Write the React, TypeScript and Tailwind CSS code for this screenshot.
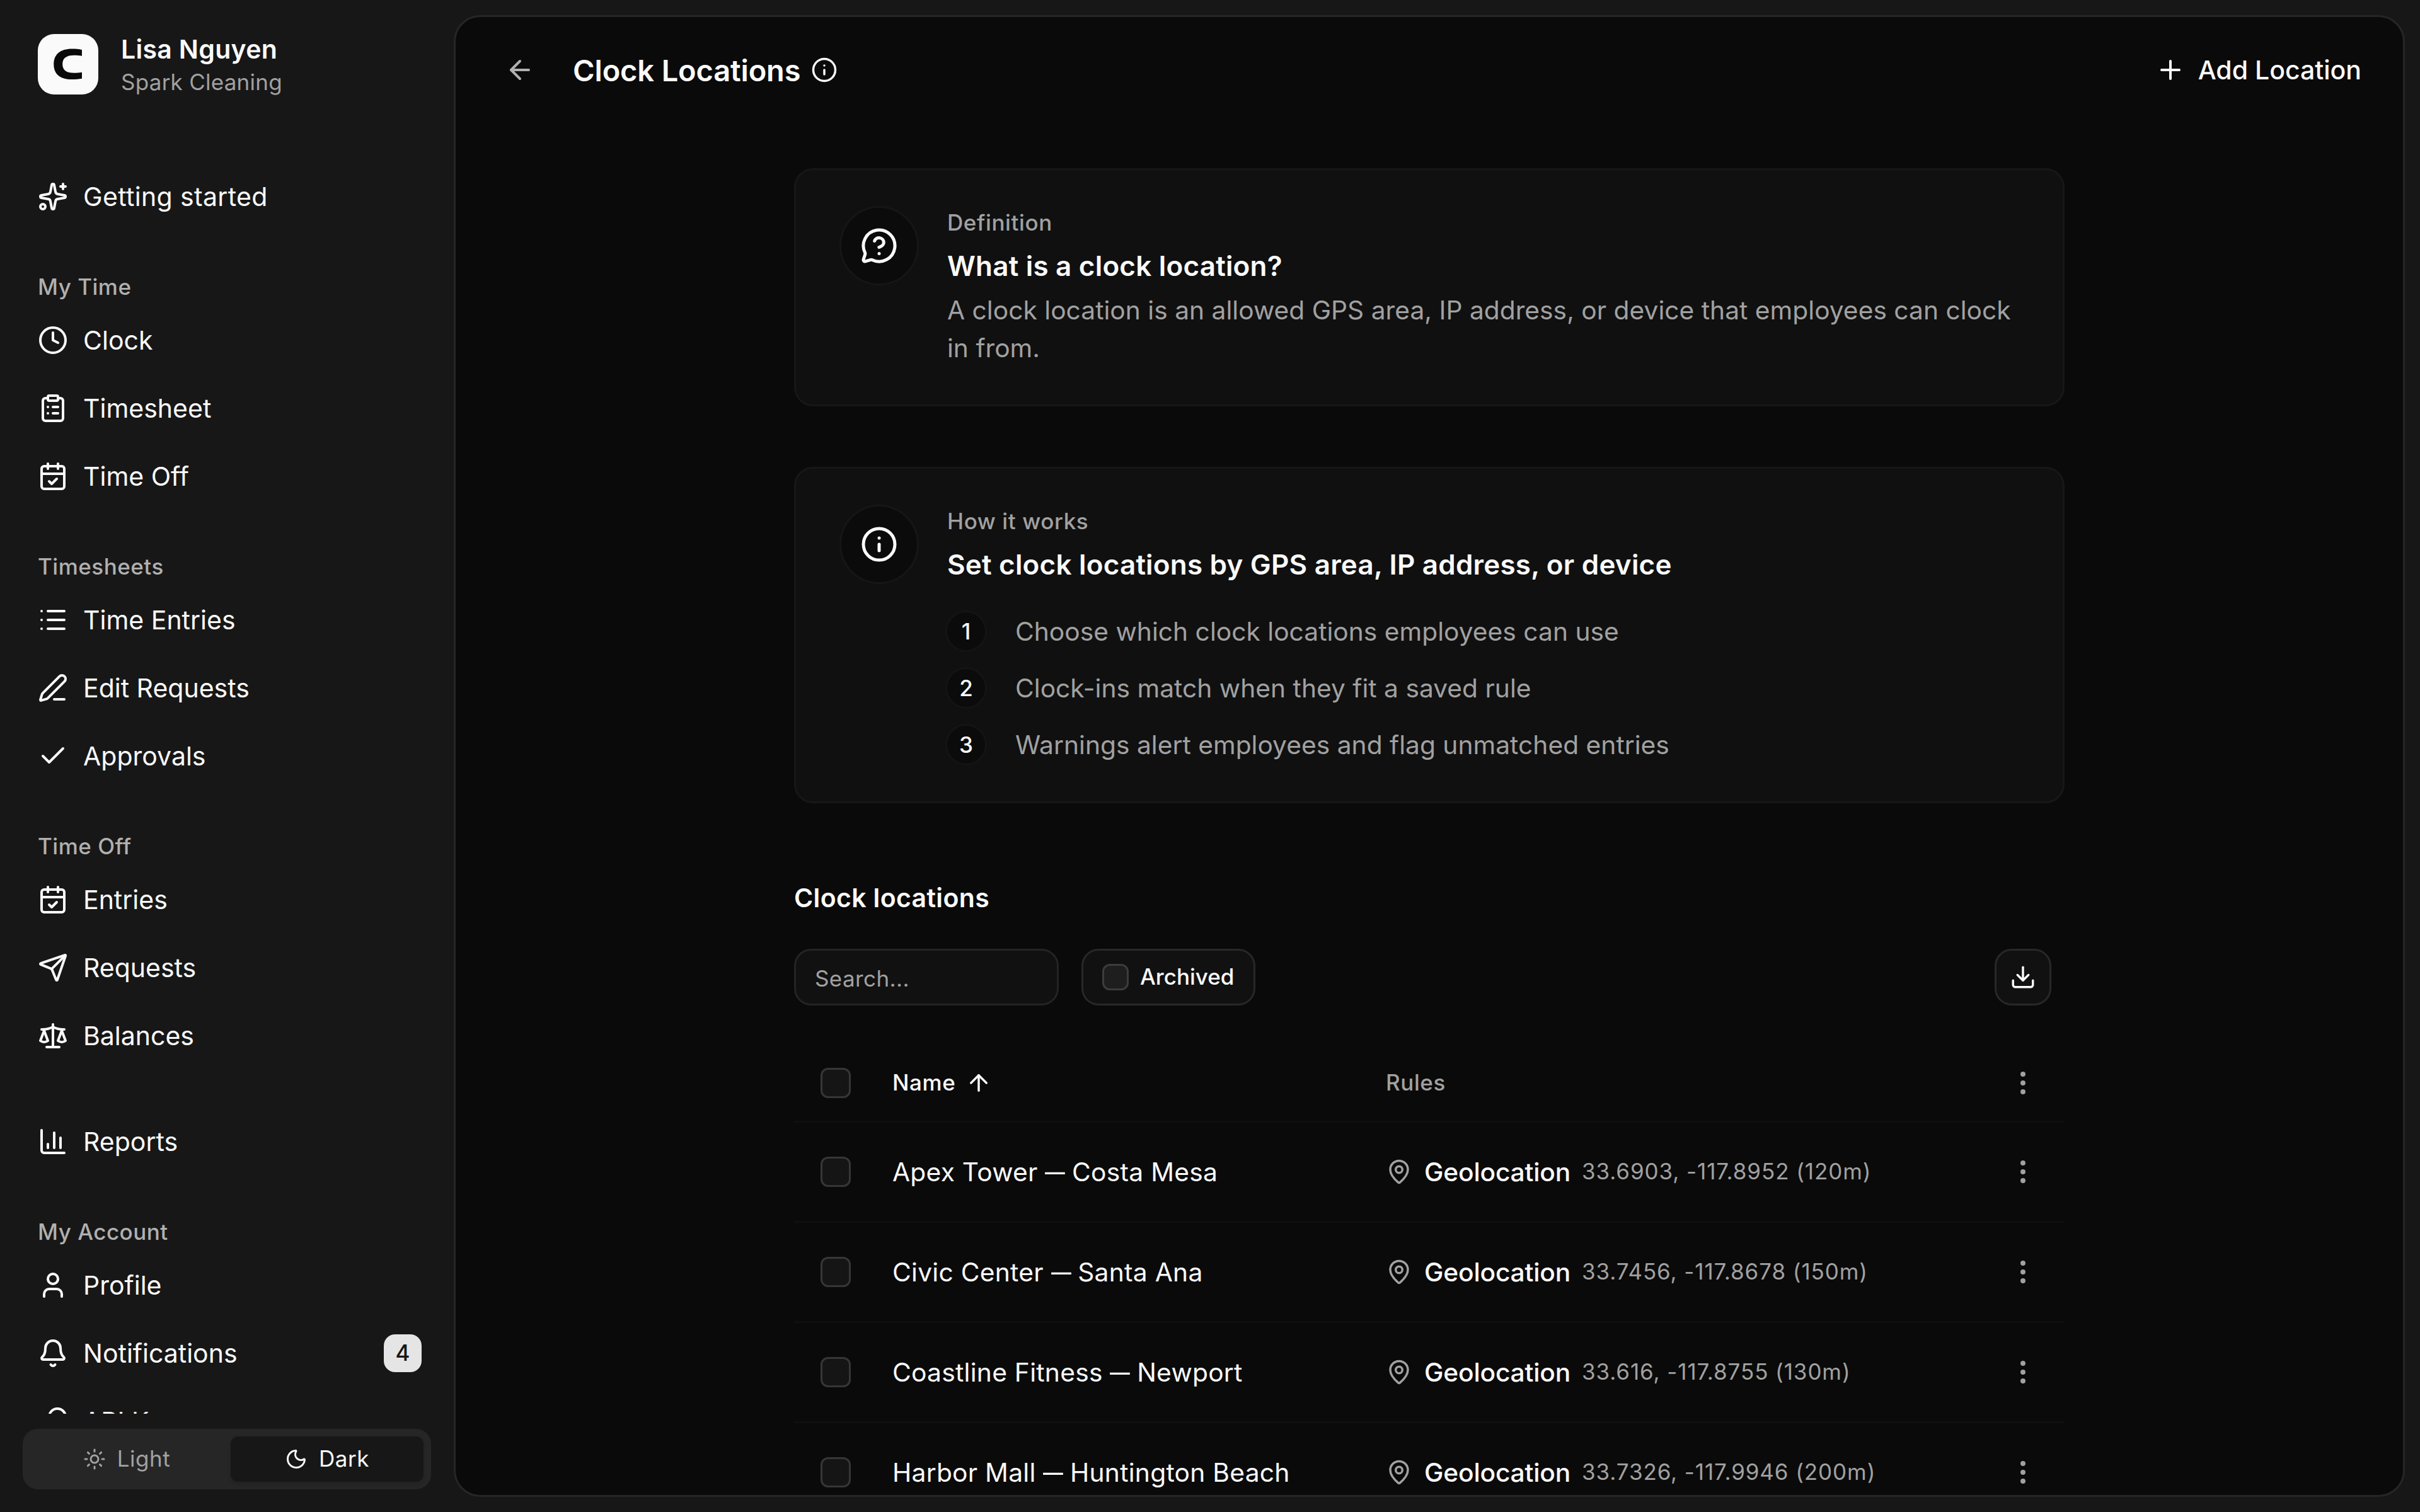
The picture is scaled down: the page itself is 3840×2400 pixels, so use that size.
import React, { type ReactNode } from "react";
import {
  ArrowLeft,
  ArrowUp,
  Bell,
  CalendarCheck,
  Check,
  ClipboardList,
  Clock,
  Download,
  EllipsisVertical,
  Info,
  KeyRound,
  List,
  MapPin,
  MessageCircleQuestionMark,
  Moon,
  PenLine,
  Plus,
  Scale,
  Send,
  Sun,
  User,
  type LucideIcon,
} from "lucide-react";

/* Four-pointed spark with a plus and a small ring. */
function SparkIcon({ className }: { className?: string }) {
  return (
    <svg viewBox="0 0 24 24" fill="none" stroke="currentColor" strokeWidth="2" strokeLinecap="round" strokeLinejoin="round" className={className}>
      <path d="M11.017 2.814a1 1 0 0 1 1.966 0l1.051 5.558a2 2 0 0 0 1.594 1.594l5.558 1.051a1 1 0 0 1 0 1.966l-5.558 1.051a2 2 0 0 0-1.594 1.594l-1.051 5.558a1 1 0 0 1-1.966 0l-1.051-5.558a2 2 0 0 0-1.594-1.594l-5.558-1.051a1 1 0 0 1 0-1.966l5.558-1.051a2 2 0 0 0 1.594-1.594z" />
      <path d="M20 2v4" />
      <path d="M22 4h-4" />
      <circle cx="4" cy="20" r="2" />
    </svg>
  );
}

/* Bars of a small chart beside an L-shaped axis. */
function ReportsIcon({ className }: { className?: string }) {
  return (
    <svg viewBox="0 0 24 24" fill="none" stroke="currentColor" strokeWidth="2" strokeLinecap="round" strokeLinejoin="round" className={className}>
      <path d="M3 3v16a2 2 0 0 0 2 2h16" />
      <path d="M18 17V9" />
      <path d="M13 17V5" />
      <path d="M8 17v-3" />
    </svg>
  );
}

function Logo() {
  return (
    <svg viewBox="0 0 96 96" className="size-24 shrink-0">
      <rect width="96" height="96" rx="26" fill="#fafafa" />
      <path
        d="M70 24.900C65 24 60 23.600 54 23.600C36 23.600 25.300 32 25.300 48C25.300 64 36 72 54 72C60 72 65 71.700 70 70.800V60.800C65.500 61.500 61.500 61.800 57.500 61.800C45.500 61.800 39.200 57.500 39.200 47.800C39.200 38 45.500 33.700 57.500 33.700C61.500 33.700 65.500 34 70 34.800Z"
        fill="#0a0a0a"
      />
    </svg>
  );
}

type Icon = LucideIcon | typeof SparkIcon;

function NavItem({ icon: I, label, badge }: { icon: Icon; label: string; badge?: string }) {
  return (
    <div className="flex h-[108px] shrink-0 items-center text-[41px] text-[#fafafa]">
      <I className="mr-6 size-12 shrink-0" />
      <span className={label === "Getting started" ? "leading-[60px] tracking-[0.35px]" : "leading-[60px]"}>{label}</span>
      {badge && (
        <span className="ml-auto flex size-[60px] items-center justify-center rounded-[18px] bg-[#e5e5e5] pb-0.5 text-[35px] font-medium text-[#171717]">
          {badge}
        </span>
      )}
    </div>
  );
}

function NavGroup({ label, children }: { label?: string; children: ReactNode }) {
  return (
    <div className="mb-[60px] flex shrink-0 flex-col">
      {label && <div className="h-[60px] text-[35px] font-medium leading-[58px] tracking-[0.5px] text-[#b0b0b0]">{label}</div>}
      {children}
    </div>
  );
}

function Sidebar() {
  return (
    <aside className="flex h-full w-[720px] shrink-0 flex-col">
      <div className="flex h-[204px] shrink-0 items-center gap-9 pl-[60px]">
        <Logo />
        <div className="mt-1 flex flex-col">
          <div className="h-[52px] text-[41px] font-semibold leading-[52px] tracking-[0.3px] text-[#fafafa]">Lisa Nguyen</div>
          <div className="h-[52px] text-[35px] leading-[53px] tracking-[0.25px] text-[#a1a1a1]">Spark Cleaning</div>
        </div>
      </div>
      <nav className="flex h-[2040px] shrink-0 flex-col overflow-hidden pl-[60px] pr-[51px] pt-[54px]">
        <NavGroup>
          <NavItem icon={SparkIcon} label="Getting started" />
        </NavGroup>
        <NavGroup label="My Time">
          <NavItem icon={Clock} label="Clock" />
          <NavItem icon={ClipboardList} label="Timesheet" />
          <NavItem icon={CalendarCheck} label="Time Off" />
        </NavGroup>
        <NavGroup label="Timesheets">
          <NavItem icon={List} label="Time Entries" />
          <NavItem icon={PenLine} label="Edit Requests" />
          <NavItem icon={Check} label="Approvals" />
        </NavGroup>
        <NavGroup label="Time Off">
          <NavItem icon={CalendarCheck} label="Entries" />
          <NavItem icon={Send} label="Requests" />
          <NavItem icon={Scale} label="Balances" />
        </NavGroup>
        <NavGroup>
          <NavItem icon={ReportsIcon} label="Reports" />
        </NavGroup>
        <NavGroup label="My Account">
          <NavItem icon={User} label="Profile" />
          <NavItem icon={Bell} label="Notifications" badge="4" />
          <NavItem icon={KeyRound} label="API Keys" />
        </NavGroup>
      </nav>
      <div className="ml-9 mt-6 grid h-24 w-[648px] shrink-0 grid-cols-2 gap-3 rounded-[24px] bg-[#262626] p-3 text-[35px] tracking-[0.5px]">
        <div className="flex items-center justify-center gap-[18px] text-[#a1a1a1]">
          <Sun className="size-9" />
          <span className="pb-0.5">Light</span>
        </div>
        <div className="flex items-center justify-center gap-[18px] rounded-[12px] bg-[#171717] text-[#fafafa] shadow-[0_3px_6px_rgba(0,0,0,0.12)]">
          <Moon className="size-9" />
          <span className="pb-0.5">Dark</span>
        </div>
      </div>
    </aside>
  );
}

function InfoCard({ icon: I, eyebrow, title, height, children }: { icon: LucideIcon; eyebrow: string; title: string; height: string; children: ReactNode }) {
  return (
    <section className={`flex shrink-0 items-start rounded-[30px] border-[3px] border-[#171717] bg-[#101010] pl-[69px] pt-[57px] ${height}`}>
      <div className="flex size-[126px] shrink-0 items-center justify-center rounded-full border-[3px] border-[#161616] bg-[#0b0b0b] text-[#fafafa]">
        <I className="size-[60px]" />
      </div>
      <div className="ml-[45px] w-[1716px]">
        <div className="h-[54px] text-[35px] font-medium leading-[53px] tracking-[0.6px] text-[#a1a1a1]">{eyebrow}</div>
        <div className="mt-2 h-[66px] text-[44px] font-semibold leading-[66px] tracking-[0.2px] text-[#fafafa]">{title}</div>
        {children}
      </div>
    </section>
  );
}

const STEPS = [
  "Choose which clock locations employees can use",
  "Clock-ins match when they fit a saved rule",
  "Warnings alert employees and flag unmatched entries",
];

const LOCATIONS = [
  { site: "Apex Tower", city: "Costa Mesa", rule: "33.6903, -117.8952 (120m)" },
  { site: "Civic Center", city: "Santa Ana", rule: "33.7456, -117.8678 (150m)" },
  { site: "Coastline Fitness", city: "Newport", rule: "33.616, -117.8755 (130m)" },
  { site: "Harbor Mall", city: "Huntington Beach", rule: "33.7326, -117.9946 (200m)" },
];

function RowCheckbox() {
  return <div className="ml-[42px] size-12 shrink-0 rounded-[12px] border-[3px] border-[#363636] bg-[#151515]" />;
}

function LocationsTable() {
  return (
    <div className="flex flex-col">
      <div className="flex h-[123px] shrink-0 items-center border-b-[3px] border-[#0f0f0f] text-[35px] font-medium tracking-[0.6px]">
        <RowCheckbox />
        <div className="ml-[66px] flex w-[783px] items-center gap-[16px] text-[#fafafa]">
          <span className="pb-0.5">Name</span>
          <ArrowUp className="size-[42px]" />
        </div>
        <div className="pb-0.5 text-[#a1a1a1]">Rules</div>
        <EllipsisVertical className="ml-auto mr-[42px] size-12 text-[#a1a1a1]" />
      </div>
      {LOCATIONS.map((l) => (
        <div key={l.site} className="flex h-[159px] shrink-0 items-center border-b-[3px] border-[#0f0f0f]">
          <RowCheckbox />
          <div className="ml-[66px] w-[783px] whitespace-nowrap pt-0.5 text-[40.75px] tracking-[0.25px] text-[#fafafa]">
            {l.site} <span className="-mr-[10px] inline-block origin-left scale-x-[0.78]">—</span> {l.city}
          </div>
          <MapPin className="size-[42px] text-[#a1a1a1]" />
          <span className="ml-[19px] pt-0.5 text-[40.75px] font-medium tracking-[-0.2px] text-[#fafafa]">Geolocation</span>
          <span className="ml-[18px] pb-0.5 text-[35px] tracking-[0.9px] text-[#a1a1a1]">{l.rule}</span>
          <EllipsisVertical className="ml-auto mr-[42px] size-12 text-[#a1a1a1]" />
        </div>
      ))}
    </div>
  );
}

export default function App() {
  return (
    <div className="flex h-[2400px] w-[3840px] overflow-hidden bg-[#171717] font-['Inter',sans-serif]">
      <Sidebar />
      <main className="mt-6 flex h-[2352px] w-[3096px] flex-col overflow-hidden rounded-[42px] border-[3px] border-[#262626] bg-[#0a0a0a]">
        <header className="flex h-[168px] shrink-0 items-center pl-[78px] pr-[66px]">
          <ArrowLeft className="size-12 text-[#b0b0b0]" />
          <h1 className="ml-[60px] pt-0.5 text-[47px] font-semibold tracking-[-0.15px] text-[#fafafa]">Clock Locations</h1>
          <Info className="ml-[17px] size-[42px] text-[#fafafa]" />
          <button className="ml-auto flex items-center gap-5 text-[41px] font-medium text-[#fafafa]">
            <Plus className="size-12" />
            <span className="pt-0.5">Add Location</span>
          </button>
        </header>
        <div className="ml-[537px] mt-[72px] flex w-[2016px] flex-col">
          <InfoCard icon={MessageCircleQuestionMark} eyebrow="Definition" title="What is a clock location?" height="h-[378px]">
            <p className="mt-2 text-[40.75px] leading-[60px] text-[#a1a1a1]">
              A clock location is an allowed GPS area, IP address, or device that employees can clock in from.
            </p>
          </InfoCard>
          <div className="h-24 shrink-0" />
          <InfoCard icon={Info} eyebrow="How it works" title="Set clock locations by GPS area, IP address, or device" height="h-[534px]">
            <ol className="-ml-[3px] mt-10 flex flex-col gap-6">
              {STEPS.map((s, i) => (
                <li key={s} className="flex h-[66px] items-center">
                  <span className="flex size-[66px] items-center justify-center rounded-full border-[3px] border-[#141414] bg-[#0b0b0b] text-[35px] font-medium text-[#fafafa]">
                    {i + 1}
                  </span>
                  <span className="ml-[45px] pt-0.5 text-[40.75px] text-[#a1a1a1]">{s}</span>
                </li>
              ))}
            </ol>
          </InfoCard>
          <h2 className="mt-[117px] h-[66px] text-[41px] font-semibold leading-[66px] tracking-[0.35px] text-[#fafafa]">Clock locations</h2>
          <div className="mt-12 flex h-[90px] shrink-0 items-center">
            <div className="flex h-[90px] w-[420px] items-center rounded-[27px] border-[3px] border-[#242424] bg-[#111111] pl-[30px] pt-1 text-[35px] tracking-[0.4px] text-[#a1a1a1]">
              Search...
            </div>
            <div className="ml-9 flex h-[90px] w-[276px] items-center rounded-[27px] border-[3px] border-[#282828] bg-[#111111] pl-[30px] text-[35px] font-medium text-[#fafafa]">
              <div className="mr-[18px] size-[42px] rounded-[12px] border-[3px] border-[#3c3c3c] bg-[#1e1e1e]" />
              <span className="pb-0.5">Archived</span>
            </div>
            <div className="ml-auto mr-[21px] flex size-[90px] items-center justify-center rounded-[27px] border-[3px] border-[#282828] bg-[#111111] text-[#fafafa]">
              <Download className="size-[42px]" />
            </div>
          </div>
          <div className="h-[63px] shrink-0" />
          <LocationsTable />
        </div>
      </main>
    </div>
  );
}
